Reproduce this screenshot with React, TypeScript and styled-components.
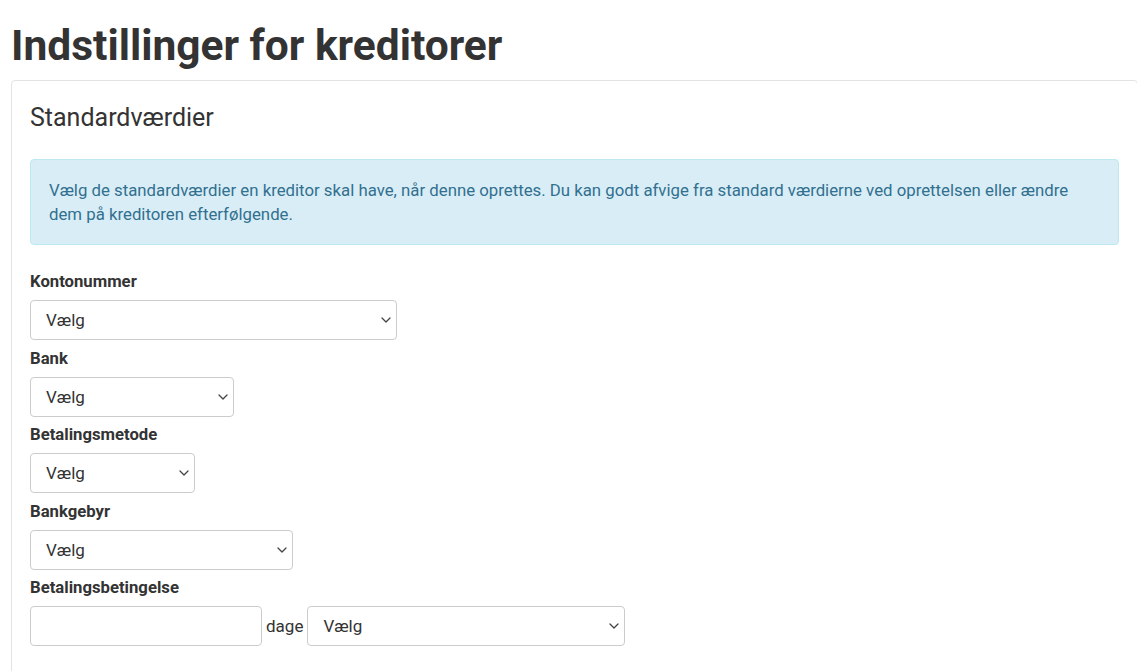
import styled, { createGlobalStyle } from 'styled-components';

const GlobalStyle = createGlobalStyle`
  html, body {
    margin: 0;
    padding: 0;
    background: #fff;
    overflow: hidden;
  }
  body {
    font-family: Roboto, "Liberation Sans", sans-serif;
    color: #333;
  }
  * {
    box-sizing: border-box;
  }
`;

type Field = {
  label: string;
  width: number;
};

const fields: Field[] = [
  { label: 'Kontonummer', width: 367 },
  { label: 'Bank', width: 204 },
  { label: 'Betalingsmetode', width: 165 },
  { label: 'Bankgebyr', width: 263 },
];

const Chevron = () => (
  <svg width="10" height="6" viewBox="0 0 10 6">
    <path d="M1 1l4 4 4-4" fill="none" stroke="#444" strokeWidth="1.3" strokeLinecap="round" strokeLinejoin="round" />
  </svg>
);

const SelectBox = ({ width }: { width: number }) => (
  <Select style={{ width }}>
    <span>Vælg</span>
    <Chevron />
  </Select>
);

const App = () => {
  return (
    <Page>
      <GlobalStyle />
      <Title>Indstillinger for kreditorer</Title>
      <Card>
        <Heading>Standardværdier</Heading>
        <Alert>
          Vælg de standardværdier en kreditor skal have, når denne oprettes. Du kan godt afvige fra standard værdierne ved oprettelsen eller ændre
          dem på kreditoren efterfølgende.
        </Alert>
        <Form>
          {fields.map((field) => (
            <Group key={field.label}>
              <Label>{field.label}</Label>
              <SelectBox width={field.width} />
            </Group>
          ))}
          <Group>
            <Label>Betalingsbetingelse</Label>
            <Inline>
              <TextInput />
              <Unit>dage</Unit>
              <SelectBox width={318} />
            </Inline>
          </Group>
        </Form>
      </Card>
    </Page>
  );
};

const Page = styled.div`
  padding: 0 0 0 11px;
  width: 1138px;
`;

const Title = styled.h1`
  margin: 0;
  padding: 21px 0 9px 0;
  font-size: 42.5px;
  line-height: 50px;
  font-weight: 700;
  color: #333;
`;

const Card = styled.div`
  border: 1px solid #e3e3e3;
  border-radius: 4px;
  padding: 20px 18px 30px 18px;
`;

const Heading = styled.h2`
  margin: 0 0 24px 0;
  font-size: 25px;
  line-height: 34px;
  font-weight: 400;
  color: #333;
`;

const Alert = styled.div`
  background: #d9edf7;
  border: 1px solid #bce8f1;
  border-radius: 4px;
  color: #31708f;
  font-size: 16.8px;
  line-height: 24px;
  padding: 18px 45px 18px 18px;
  margin-bottom: 27px;
`;

const Form = styled.div`
  display: flex;
  flex-direction: column;
  gap: 8.5px;
`;

const Group = styled.div`
  display: flex;
  flex-direction: column;
  align-items: flex-start;
`;

const Label = styled.label`
  font-size: 16.7px;
  line-height: 20px;
  font-weight: 700;
  color: #333;
  margin-bottom: 8px;
`;

const Select = styled.div`
  height: 40px;
  border: 1px solid #ccc;
  border-radius: 4px;
  display: flex;
  align-items: center;
  justify-content: space-between;
  padding: 0 5px 0 15px;
  font-size: 17px;
  color: #333;
  background: #fff;
`;

const Inline = styled.div`
  display: flex;
  align-items: center;
  gap: 4px;
`;

const TextInput = styled.div`
  width: 232px;
  height: 40px;
  border: 1px solid #ccc;
  border-radius: 4px;
  background: #fff;
`;

const Unit = styled.span`
  font-size: 17px;
  color: #333;
`;

export default App;
